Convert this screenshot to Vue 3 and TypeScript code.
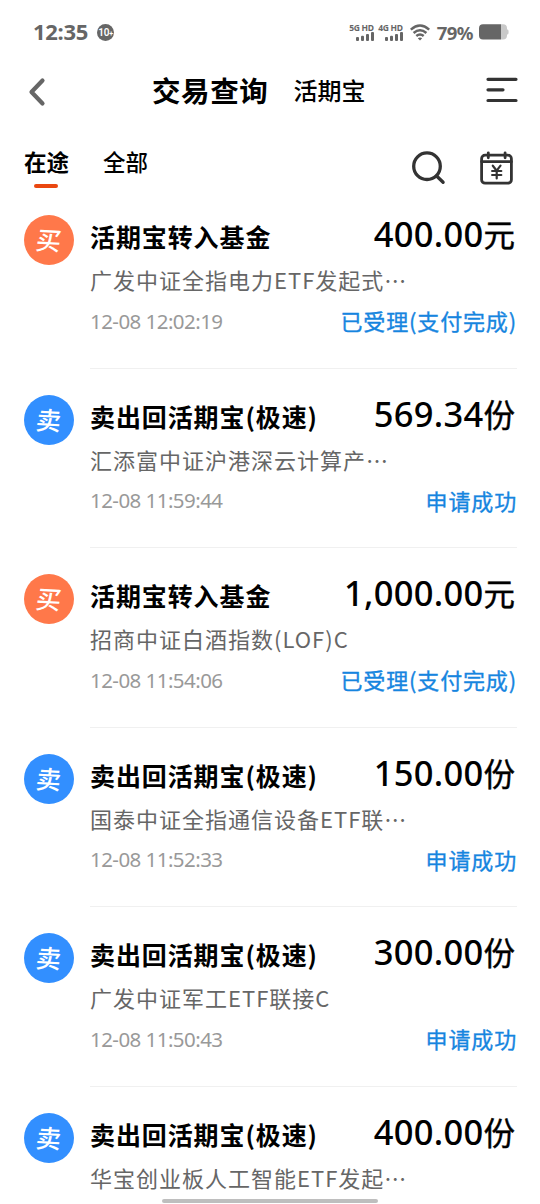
<script setup lang="ts">
interface Trade {
  kind: 'buy' | 'sell'
  title: string
  amount: string
  unit: string
  fund: string
  more: boolean
  time?: string
  status?: string
}

const trades: Trade[] = [
  { kind: 'buy', title: '活期宝转入基金', amount: '400.00', unit: '元', fund: '广发中证全指电力ETF发起式', more: true, time: '12-08 12:02:19', status: '已受理(支付完成)' },
  { kind: 'sell', title: '卖出回活期宝(极速)', amount: '569.34', unit: '份', fund: '汇添富中证沪港深云计算产', more: true, time: '12-08 11:59:44', status: '申请成功' },
  { kind: 'buy', title: '活期宝转入基金', amount: '1,000.00', unit: '元', fund: '招商中证白酒指数(LOF)C', more: false, time: '12-08 11:54:06', status: '已受理(支付完成)' },
  { kind: 'sell', title: '卖出回活期宝(极速)', amount: '150.00', unit: '份', fund: '国泰中证全指通信设备ETF联', more: true, time: '12-08 11:52:33', status: '申请成功' },
  { kind: 'sell', title: '卖出回活期宝(极速)', amount: '300.00', unit: '份', fund: '广发中证军工ETF联接C', more: false, time: '12-08 11:50:43', status: '申请成功' },
  { kind: 'sell', title: '卖出回活期宝(极速)', amount: '400.00', unit: '份', fund: '华宝创业板人工智能ETF发起', more: true },
]
</script>

<template>
  <div class="screen">
    <div class="statusbar">
      <span class="clock">12:35</span>
      <span class="chip">10<i>+</i></span>
      <div class="sys">
        <div v-for="net in ['5G', '4G']" :key="net" class="net">
          <span>{{ net }} HD</span>
          <svg width="18" height="9" viewBox="0 0 18 9" fill="#666">
            <rect x="0" y="5" width="3" height="4" rx="1" /><rect x="5" y="3.7" width="3" height="5.3" rx="1" />
            <rect x="10" y="2" width="3" height="7" rx="1" /><rect x="15" y="0" width="3" height="9" rx="1" />
          </svg>
        </div>
        <svg class="wifi" width="20" height="17" viewBox="0 0 20 17" fill="none" stroke="#666" stroke-width="2.5">
          <path d="M.8 5.6Q10-2.6 19.2 5.6M3.6 9Q10 3.4 16.4 9M6.3 12Q10 8.9 13.7 12" />
          <path d="M10 16.6 7.8 14.2Q10 12.6 12.2 14.2Z" fill="#666" stroke="none" />
        </svg>
        <span class="pct">79%</span>
        <svg width="30" height="16" viewBox="0 0 30 16">
          <path d="M22 .3h2a4 4 0 0 1 4 4v.9l1.3.9q.7 1.9 0 3.8l-1.3.9v.6a4 4 0 0 1-4 4h-2z" fill="#c9c9c9" />
          <path d="M4 .3h18v15.1H4a4 4 0 0 1-4-4V4.300a4 4 0 0 1 4-4z" fill="#666" />
        </svg>
      </div>
    </div>

    <header class="nav">
      <svg width="18" height="30" viewBox="0 0 18 30" fill="none" stroke="#666" stroke-width="4.200" stroke-linecap="round" stroke-linejoin="round"><path d="M14.500 3.500 3.500 15l11 11.500" /></svg>
      <h1>交易查询</h1>
      <span class="account">活期宝</span>
      <svg class="menu" width="32" height="26" viewBox="0 0 32 26" fill="none" stroke="#333" stroke-width="3.200" stroke-linecap="round"><path d="M2 2.300h28M2 12.800h15M2 23.500h28" /></svg>
    </header>

    <div class="tabs">
      <span class="tab active">在途</span>
      <span class="tab">全部</span>
      <div class="tools">
        <svg width="34" height="34" viewBox="0 0 34 34" fill="none" stroke="#333" stroke-width="3.300" stroke-linecap="round"><circle cx="15" cy="15.200" r="13.300" /><path d="m24.600 25 6.500 6.300" /></svg>
        <svg width="34" height="34" viewBox="0 0 34 34" fill="none" stroke="#333" stroke-width="2.800" stroke-linecap="round" stroke-linejoin="round">
          <rect x="1.600" y="4.200" width="29.800" height="28" rx="3.500" /><path d="M1.600 10.700h29.800M8.300 1.800v5M25.100 1.800v5" />
          <path d="m12.800 14.700 3.900 5 3.800-5M12.100 20h9.200M12.100 24h9.200M16.700 20v7.500" stroke-width="2.200" />
        </svg>
      </div>
    </div>

    <main>
      <article v-for="(t, i) in trades" :key="i" class="trade">
        <div class="badge" :class="t.kind"><span>{{ t.kind === 'buy' ? '买' : '卖' }}</span></div>
        <div class="body">
          <div class="line head"><span class="title">{{ t.title }}</span><span class="amount">{{ t.amount }}<b>{{ t.unit }}</b></span></div>
          <div class="fund">{{ t.fund }}<span v-if="t.more">⋯</span></div>
          <div v-if="t.time" class="line foot"><time>{{ t.time }}</time><span class="status">{{ t.status }}</span></div>
        </div>
      </article>
    </main>
    <div class="homebar"></div>
  </div>
</template>

<style>
body { margin: 0; background: #fff; overflow: hidden; }
</style>

<style scoped>
.screen { position: relative; width: 540px; height: 1204px; overflow: hidden; background: #fff; color: #000; font-family: "Noto Sans CJK SC", sans-serif; white-space: nowrap; }
svg { display: block; flex: none; }
.statusbar { display: flex; align-items: center; height: 64px; padding: 0 31px 0 33px; box-sizing: border-box; color: #666; }
.clock { font: 700 22px/30px "Noto Sans", sans-serif; width: 56px; letter-spacing: -.3px; margin-top: -3px; }
.chip { width: 17px; height: 17px; margin-left: 8px; border-radius: 50%; background: #666; color: #fff; font: 600 10px/17px Roboto, sans-serif; letter-spacing: -.3px; text-align: center; }
.chip i { font: 700 7px/7px Roboto, sans-serif; }
.sys { display: flex; align-items: center; margin-left: auto; }
.net { width: 24px; margin-right: 5px; height: 17px; display: flex; flex-direction: column; align-items: flex-end; justify-content: space-between; font: 700 8.500px/7px "Noto Sans", sans-serif; letter-spacing: -.3px; }
.wifi { margin-left: 2px; }
.pct { font: 700 18.500px/24px "Noto Sans", sans-serif; margin: 1px 6px 0 7px; letter-spacing: -.5px; }
.nav { display: flex; align-items: center; height: 56px; padding: 0 22px 0 28px; }
.nav h1 { margin: -4px 0 0 106px; font-size: 28.500px; line-height: 40px; font-weight: 700; letter-spacing: .6px; }
.account { margin: -6px 0 0 25px; font-size: 24px; font-weight: 500; }
.menu { margin-left: auto; margin-top: -4px; }
.tabs { display: flex; height: 69px; padding: 0 26px 0 24px; align-items: flex-start; }
.tab { position: relative; margin-right: 34px; padding-top: 24px; font-size: 22.500px; line-height: 35px; font-weight: 500; }
.active { font-weight: 700; }
.active::after { content: ""; position: absolute; left: 10px; top: 64px; width: 24px; height: 4px; border-radius: 2px; background: #ea4710; }
.tools { display: flex; gap: 34px; margin: 31px 0 0 auto; }
.trade { display: flex; height: 179.500px; padding: 0 24px; box-sizing: border-box; }
.badge { flex: none; width: 50px; height: 50px; margin-top: 26px; border-radius: 50%; color: #fff; font-size: 25px; line-height: 48px; font-weight: 500; text-align: center; }
.badge span { display: block; transform: skewX(-5deg) rotate(3deg); }
.buy { background: #ff784a; }
.sell { background: #328fff; }
.body { flex: 1; margin-left: 16px; margin-right: -1px; border-bottom: 1px solid #f0f0f0; }
.line { display: flex; justify-content: space-between; }
.head { height: 70px; align-items: baseline; padding-top: 19px; box-sizing: border-box; }
.title { font-size: 25px; line-height: 54px; font-weight: 700; letter-spacing: .9px; }
.amount { font: 500 34.500px/50px "Noto Sans", sans-serif; letter-spacing: .3px; padding-right: 2px; }
.amount b { font: 400 31.500px/50px "Noto Sans CJK SC", sans-serif; letter-spacing: 0; -webkit-text-stroke: .4px #000; }
.fund { height: 40px; font-size: 22px; line-height: 40px; color: #666; letter-spacing: 1px; }
.foot { height: 42px; align-items: center; }
time { font: 400 20.500px/30px "Noto Sans", sans-serif; color: #999; letter-spacing: -.55px; margin-top: 1px; }
.status { font-size: 22px; font-weight: 400; color: #1685df; letter-spacing: .85px; -webkit-text-stroke: .35px #1685df; }
.homebar { position: absolute; left: 162px; top: 1199px; width: 216px; height: 4px; border-radius: 2px; background: #bebebe; }
</style>
